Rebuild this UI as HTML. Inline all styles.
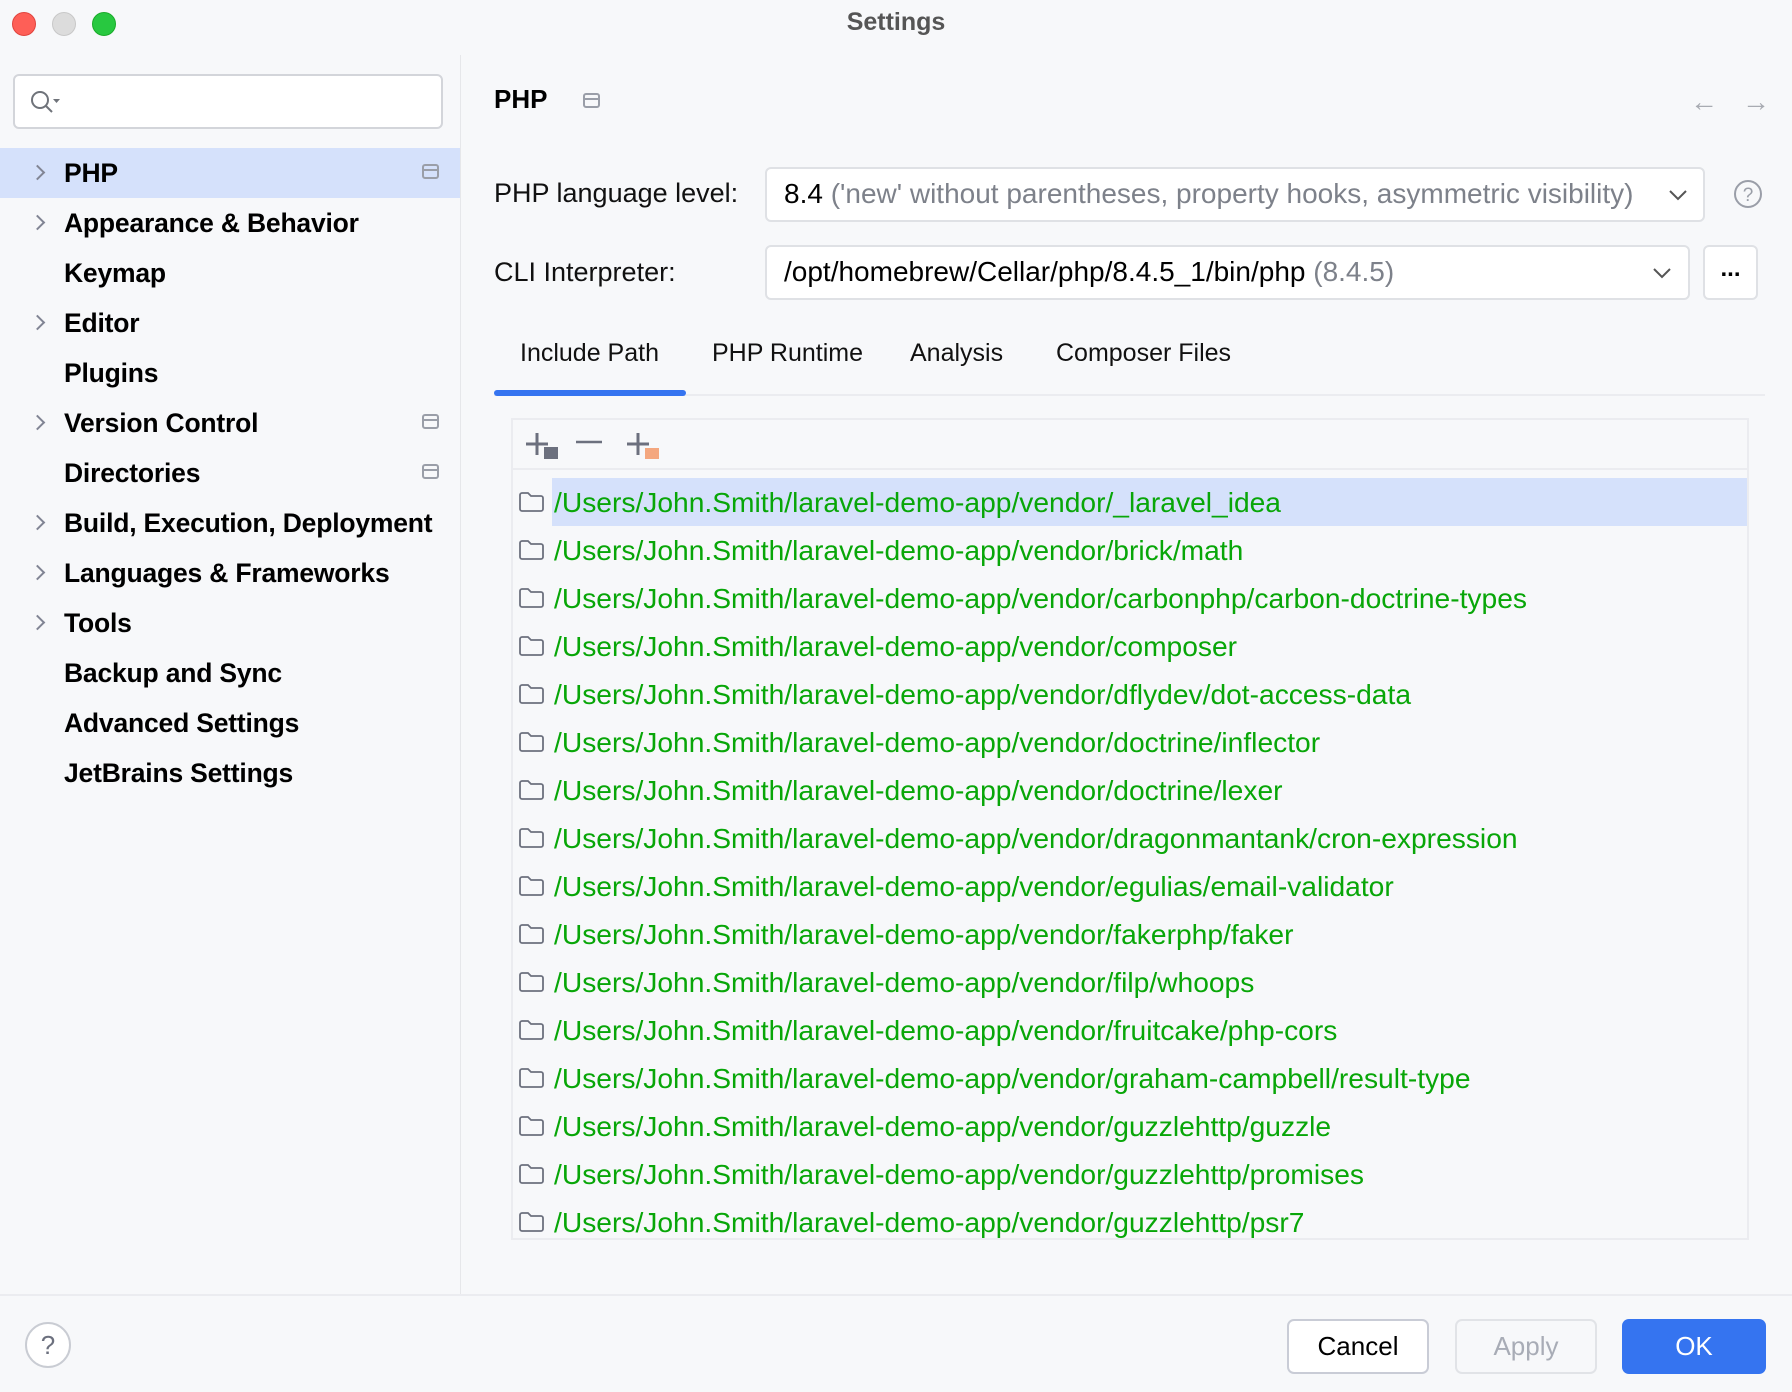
<!DOCTYPE html>
<html><head><meta charset="utf-8"><style>
*{box-sizing:border-box;margin:0;padding:0}
body{width:1792px;height:1392px;background:#f7f8fa;font-family:"Liberation Sans",sans-serif;position:relative;overflow:hidden;color:#000}
.a{position:absolute}
.dot{width:24px;height:24px;border-radius:50%;top:12px}
.side{left:0;top:55px;width:461px;height:1240px;border-right:1px solid #e6e7ea}
.it{position:absolute;left:64px;font-size:26.5px;font-weight:bold;line-height:50px;height:50px;letter-spacing:-0.2px}
.chev{position:absolute;left:32px;width:11px;height:11px;border-right:2px solid #818594;border-top:2px solid #818594;transform:rotate(45deg)}
.pin{position:absolute;width:17px;height:15px;border:2px solid #9a9ea8;border-radius:3px}
.pin:after{content:"";position:absolute;left:0;right:0;top:3px;border-top:2px solid #9a9ea8}
.lbl{font-size:27px;color:#111}
.tab{font-size:25px;color:#111}
.box{background:#fff;border:2px solid #dfe1e5;border-radius:6px}
.row{position:absolute;left:518px;height:48px;width:1230px}
.row span{position:absolute;left:36px;top:0;line-height:48px;font-size:28.2px;color:#08a608;white-space:nowrap}
.fold{position:absolute;left:0;top:13px;width:27px;height:22px}
.btn{position:absolute;top:1319px;height:55px;border-radius:7px;font-size:26px;text-align:center;line-height:51px}
</style></head><body>
<div class="a dot" style="left:12px;background:#fe5f57;border:1px solid #e0443e"></div>
<div class="a dot" style="left:52px;background:#dcdcdc;border:1px solid #c8c8c8"></div>
<div class="a dot" style="left:92px;background:#28c840;border:1px solid #1aab29"></div>
<div class="a" style="left:0;width:1792px;top:8px;text-align:center;font-size:25px;font-weight:bold;color:#555">Settings</div>

<div class="a side"></div>
<div class="a box" style="left:13px;top:74px;width:430px;height:55px;border-color:#d3d5da"></div>
<svg class="a" style="left:28px;top:88px" width="40" height="28" viewBox="0 0 40 28"><circle cx="12" cy="12" r="8" fill="none" stroke="#6f737a" stroke-width="2"/><path d="M18 18l6 6" stroke="#6f737a" stroke-width="2"/><path d="M25 11h7l-3.5 4z" fill="#6f737a"/></svg>

<div class="a" style="left:0;top:148px;width:460px;height:50px;background:#d5e1fb"></div>
<div class="chev" style="top:167px"></div><div class="it" style="top:148px">PHP</div><div class="pin" style="left:422px;top:164px"></div>
<div class="chev" style="top:217px"></div><div class="it" style="top:198px">Appearance &amp; Behavior</div>
<div class="it" style="top:248px">Keymap</div>
<div class="chev" style="top:317px"></div><div class="it" style="top:298px">Editor</div>
<div class="it" style="top:348px">Plugins</div>
<div class="chev" style="top:417px"></div><div class="it" style="top:398px">Version Control</div><div class="pin" style="left:422px;top:414px"></div>
<div class="it" style="top:448px">Directories</div><div class="pin" style="left:422px;top:464px"></div>
<div class="chev" style="top:517px"></div><div class="it" style="top:498px">Build, Execution, Deployment</div>
<div class="chev" style="top:567px"></div><div class="it" style="top:548px">Languages &amp; Frameworks</div>
<div class="chev" style="top:617px"></div><div class="it" style="top:598px">Tools</div>
<div class="it" style="top:648px">Backup and Sync</div>
<div class="it" style="top:698px">Advanced Settings</div>
<div class="it" style="top:748px">JetBrains Settings</div>

<div class="a" style="left:494px;top:84px;font-size:26px;font-weight:bold">PHP</div>
<div class="pin" style="left:583px;top:93px"></div>
<div class="a" style="left:1690px;top:86px;font-size:28px;color:#a8abb2">&#8592;</div>
<div class="a" style="left:1742px;top:86px;font-size:28px;color:#a8abb2">&#8594;</div>

<div class="a lbl" style="left:494px;top:178px">PHP language level:</div>
<div class="a box" style="left:765px;top:167px;width:940px;height:55px"></div>
<div class="a" style="left:784px;top:178px;font-size:28px;white-space:nowrap">8.4 <span style="color:#7d818a">('new' without parentheses, property hooks, asymmetric visibility)</span></div>
<svg class="a" style="left:1668px;top:188px" width="20" height="14"><path d="M2 3l8 8 8-8" fill="none" stroke="#555" stroke-width="2"/></svg>
<svg class="a" style="left:1733px;top:179px" width="30" height="30"><circle cx="15" cy="15" r="13" fill="none" stroke="#9a9ea8" stroke-width="2"/><text x="15" y="22" font-size="19" text-anchor="middle" fill="#9a9ea8" font-family="Liberation Sans">?</text></svg>

<div class="a lbl" style="left:494px;top:257px">CLI Interpreter:</div>
<div class="a box" style="left:765px;top:245px;width:925px;height:55px"></div>
<div class="a" style="left:784px;top:256px;font-size:28px;white-space:nowrap">/opt/homebrew/Cellar/php/8.4.5_1/bin/php <span style="color:#7d818a">(8.4.5)</span></div>
<svg class="a" style="left:1652px;top:266px" width="20" height="14"><path d="M2 3l8 8 8-8" fill="none" stroke="#555" stroke-width="2"/></svg>
<div class="a box" style="left:1703px;top:245px;width:55px;height:55px;text-align:center;font-size:24px;line-height:44px;font-weight:bold">...</div>

<div class="a" style="left:494px;top:394px;width:1271px;border-top:2px solid #ebecf0"></div>
<div class="a" style="left:494px;top:390px;width:192px;height:6px;background:#3574f0;border-radius:3px"></div>
<div class="a tab" style="left:520px;top:339px">Include Path</div>
<div class="a tab" style="left:712px;top:339px">PHP Runtime</div>
<div class="a tab" style="left:910px;top:339px">Analysis</div>
<div class="a tab" style="left:1056px;top:339px">Composer Files</div>

<div class="a" style="left:511px;top:418px;width:1238px;height:822px;border:2px solid #ebecf0"></div>
<div class="a" style="left:513px;top:468px;width:1234px;border-top:2px solid #ebecf0"></div>
<svg class="a" style="left:520px;top:428px" width="150" height="34"><path d="M17 5v22M6 16h22" stroke="#6c707e" stroke-width="3"/><rect x="24" y="19" width="14" height="12" fill="#6c707e"/><path d="M56 14h26" stroke="#6c707e" stroke-width="2.5"/><path d="M118 5v22M107 16h22" stroke="#6c707e" stroke-width="3"/><rect x="125" y="20" width="14" height="11" fill="#f4a77f"/></svg>

<div class="a" style="left:552px;top:478px;width:1195px;height:48px;background:#d5e1fb"></div>
<div id="rows"></div>
<script>
var p=["_laravel_idea","brick/math","carbonphp/carbon-doctrine-types","composer","dflydev/dot-access-data","doctrine/inflector","doctrine/lexer","dragonmantank/cron-expression","egulias/email-validator","fakerphp/faker","filp/whoops","fruitcake/php-cors","graham-campbell/result-type","guzzlehttp/guzzle","guzzlehttp/promises","guzzlehttp/psr7"];
var h="";p.forEach(function(s,i){h+='<div class="row" style="top:'+(478+i*48)+'px"><svg class="fold" viewBox="0 0 27 22"><path d="M2 4a2 2 0 0 1 2-2h6l3 3h10a2 2 0 0 1 2 2v11a2 2 0 0 1-2 2H4a2 2 0 0 1-2-2z" fill="none" stroke="#6c707e" stroke-width="1.8"/></svg><span>/Users/John.Smith/laravel-demo-app/vendor/'+s+'</span></div>'});
document.getElementById("rows").innerHTML=h;
</script>

<div class="a" style="left:0;top:1294px;width:1792px;border-top:2px solid #ebecf0"></div>
<svg class="a" style="left:24px;top:1321px" width="48" height="48"><circle cx="24" cy="24" r="22" fill="#fff" stroke="#c9ccd3" stroke-width="2"/><text x="24" y="33" font-size="26" text-anchor="middle" fill="#6c707e" font-family="Liberation Sans">?</text></svg>
<div class="btn" style="left:1287px;width:142px;background:#fff;border:2px solid #c9ccd6">Cancel</div>
<div class="btn" style="left:1455px;width:142px;border:2px solid #e1e3e7;color:#a8acb6">Apply</div>
<div class="btn" style="left:1622px;width:144px;background:#3574f0;color:#fff;line-height:55px">OK</div>
</body></html>
